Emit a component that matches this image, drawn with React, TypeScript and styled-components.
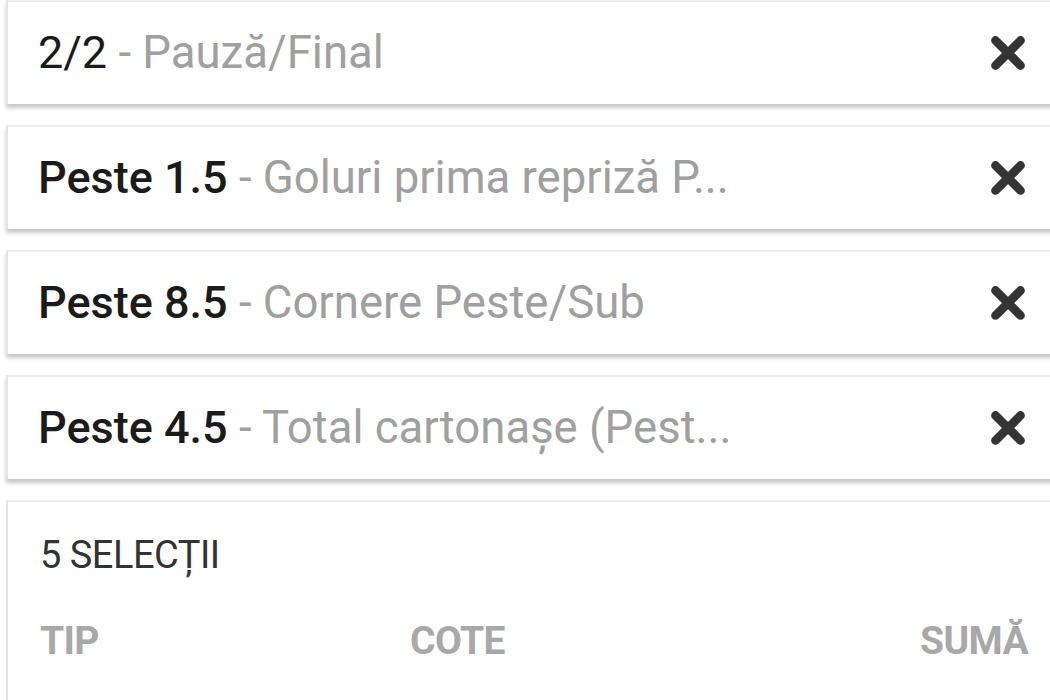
import React from 'react';
import styled, { createGlobalStyle } from 'styled-components';

const GlobalStyle = createGlobalStyle`
  html, body {
    margin: 0;
    padding: 0;
    background: #ffffff;
    overflow: hidden;
  }
  body {
    font-family: Roboto, "Liberation Sans", sans-serif;
  }
`;

const Page = styled.div`
  width: 1054px;
  padding-left: 6px;
  display: flex;
  flex-direction: column;
  gap: 21px;
`;

const Card = styled.div`
  box-sizing: border-box;
  height: 104px;
  display: flex;
  align-items: center;
  justify-content: space-between;
  padding: 0 27px 0 30px;
  background: #fff;
  border-top: 2px solid #ececec;
  border-left: 2px solid #e4e4e4;
  box-shadow: 0 4px 4px rgba(0, 0, 0, 0.22);
`;

const Label = styled.div`
  font-size: 45.5px;
  line-height: 1.2;
  white-space: nowrap;

  .market {
    color: #a0a0a0;
  }
`;

const Pick = styled.span<{ $regular?: boolean }>`
  color: #1b1b1b;
  font-weight: ${(p) => (p.$regular ? 400 : 500)};
  font-size: 45px;
`;

const CloseBtn = styled.button`
  border: 0;
  background: none;
  padding: 0;
  width: 50px;
  height: 50px;
  display: flex;
  align-items: center;
  justify-content: center;
  color: #343434;
  cursor: pointer;
`;

const Summary = styled.div`
  box-sizing: border-box;
  min-height: 220px;
  padding: 34px 32px 0 32px;
  border-top: 2px solid #ececec;
  border-left: 2px solid #e4e4e4;
  background: #fff;
`;

const Count = styled.div`
  font-size: 38px;
  line-height: 1;
  color: #333;
  letter-spacing: -0.5px;
`;

const Columns = styled.div`
  margin-top: 48px;
  display: grid;
  grid-template-columns: 370px 1fr auto;
  font-size: 39px;
  line-height: 1;
  font-weight: 700;
  color: #a8a8a8;
  letter-spacing: -0.6px;
`;

const selections = [
  { pick: '2/2', market: 'Pauză/Final', regular: true },
  { pick: 'Peste 1.5', market: 'Goluri prima repriză P...' },
  { pick: 'Peste 8.5', market: 'Cornere Peste/Sub' },
  { pick: 'Peste 4.5', market: 'Total cartonașe (Pest...' },
];

const CloseIcon = () => (
  <svg width="50" height="50" viewBox="0 0 24 24" fill="none">
    <path d="M6 6 L18 18 M18 6 L6 18" stroke="currentColor" strokeWidth="4.2" strokeLinecap="round" />
  </svg>
);

const App = () => {
  return (
    <>
      <GlobalStyle />
      <Page>
        {selections.map((s) => (
          <Card key={s.pick}>
            <Label>
              <Pick $regular={s.regular}>{s.pick}</Pick>
              <span className='market'> - {s.market}</span>
            </Label>
            <CloseBtn aria-label='Șterge'>
              <CloseIcon />
            </CloseBtn>
          </Card>
        ))}
        <Summary>
          <Count>5 SELECȚII</Count>
          <Columns>
            <span>TIP</span>
            <span>COTE</span>
            <span>SUMĂ</span>
          </Columns>
        </Summary>
      </Page>
    </>
  );
};

export default App;
